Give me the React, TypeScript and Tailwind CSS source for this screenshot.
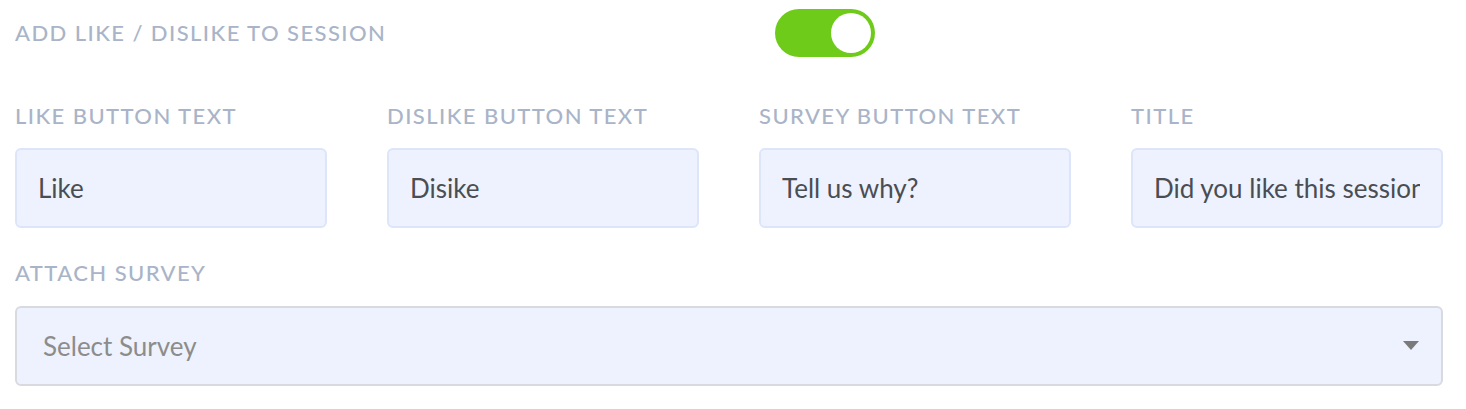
const fields = [
  { label: "LIKE BUTTON TEXT", value: "Like" },
  { label: "DISLIKE BUTTON TEXT", value: "Disike" },
  { label: "SURVEY BUTTON TEXT", value: "Tell us why?" },
  { label: "TITLE", value: "Did you like this session?" },
];

function Label({ children }: { children: React.ReactNode }) {
  return (
    <div className="text-[22px] leading-6 tracking-[0.065em] text-[#a9b4c8] font-medium">
      {children}
    </div>
  );
}

export default function App() {
  return (
    <div
      className="w-[1466px] h-[409px] bg-white pl-[15px] pt-[9px]"
      style={{ fontFamily: '"Source Sans Pro", Lato, "Noto Sans", sans-serif' }}
    >
      <div className="flex items-center h-12">
        <div className="w-[760px]">
          <Label>ADD LIKE / DISLIKE TO SESSION</Label>
        </div>
        <button className="w-[100px] h-12 rounded-full bg-[#6fcb1a] flex items-center justify-end pr-[4px]">
          <span className="w-10 h-10 rounded-full bg-white" />
        </button>
      </div>

      <div className="mt-[47px] grid grid-cols-4 gap-x-[60px] w-[1428px]">
        {fields.map((f) => (
          <div key={f.label}>
            <Label>{f.label}</Label>
            <input
              readOnly
              value={f.value}
              className="mt-5 w-[312px] h-20 rounded-md border-2 border-[#dde5fb] bg-[#eef2fe] px-[21px] text-[26px] text-[#4a4d52] outline-none"
              style={{ fontFamily: "inherit" }}
            />
          </div>
        ))}
      </div>

      <div className="mt-[33px]">
        <Label>ATTACH SURVEY</Label>
        <div className="mt-[21px] w-[1428px] h-20 rounded-md border-2 border-[#d9dadf] bg-[#eef2fe] flex items-center justify-between pl-[26px] pr-[22px]">
          <span className="text-[26px] text-[#8c8c8c]">Select Survey</span>
          <svg width="16" height="10" viewBox="0 0 16 10">
            <path d="M0 0 L16 0 L8 9 Z" fill="#7a7a7a" />
          </svg>
        </div>
      </div>
    </div>
  );
}
